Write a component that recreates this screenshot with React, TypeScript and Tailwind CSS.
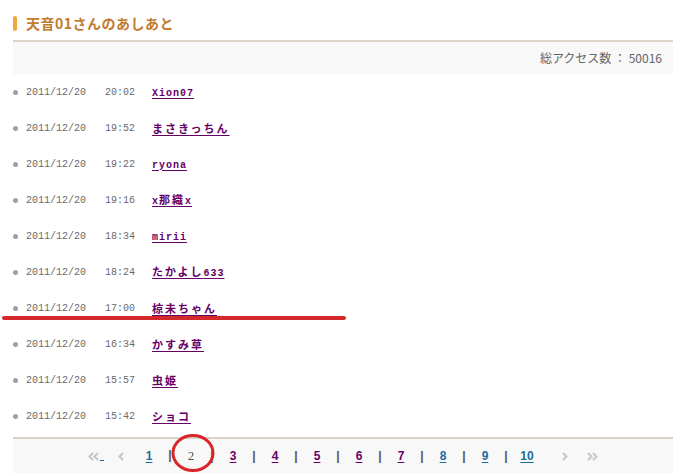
const rows: [string, string][] = [
  ['20:02', 'Xion07'],
  ['19:52', 'まさきっちん'],
  ['19:22', 'ryona'],
  ['19:16', 'x那織x'],
  ['18:34', 'mirii'],
  ['18:24', 'たかよし633'],
  ['17:00', '椋未ちゃん'],
  ['16:34', 'かすみ草'],
  ['15:57', '虫姫'],
  ['15:42', 'ショコ'],
];

// ascii in mono, CJK a bit larger and spaced out like the old bitmap font
function NameRuns({ name }: { name: string }) {
  const runs: { ascii: boolean; text: string }[] = [];
  for (const ch of name) {
    const ascii = ch.charCodeAt(0) < 128;
    const last = runs[runs.length - 1];
    if (last && last.ascii === ascii) last.text += ch;
    else runs.push({ ascii, text: ch });
  }
  return (
    <>
      {runs.map((r, i) =>
        r.ascii ? (
          <span key={i} className="text-[10px] tracking-[1px] font-['Liberation_Mono',monospace]">
            {r.text}
          </span>
        ) : (
          <span key={i} className="text-[11px] tracking-[2px] font-['Noto_Sans_CJK_JP',sans-serif]">
            {r.text}
          </span>
        )
      )}
    </>
  );
}

const Chevron = ({ double, right }: { double?: boolean; right?: boolean }) => (
  <svg width={double ? 11 : 7} height="9" viewBox={double ? '0 0 11 9' : '0 0 7 9'} className={right ? 'rotate-180' : ''}>
    <polyline points="5,1 1.5,4.5 5,8" fill="none" stroke="#c6c6c6" strokeWidth="2" />
    {double && <polyline points="10,1 6.5,4.5 10,8" fill="none" stroke="#c6c6c6" strokeWidth="2" />}
  </svg>
);

const pages = [1, 2, 3, 4, 5, 6, 7, 8, 9, 10];
const pageColor = (n: number) => (n === 1 || n >= 8 ? 'text-[#1d6c9c]' : 'text-[#660066]');

export default function App() {
  return (
    <div className="relative w-[678px] h-[473px] bg-white overflow-hidden">
      <div className="pl-[13px] pr-[5px]">
        {/* title */}
        <div className="h-[40px] pt-[6px] flex items-center">
          <div className="w-[4px] h-[15px] rounded-full bg-[#f0a63e]" />
          <h1 className="ml-[9px] text-[14px] leading-none font-bold tracking-[0.5px] text-[#c27c30] font-['Noto_Sans_CJK_JP',sans-serif]">
            天音01さんのあしあと
          </h1>
        </div>
        <div className="h-[2px] bg-[#d9d4c3]" />
        <div className="h-[32px] bg-[#f8f8f8] flex items-center justify-end pr-[11px] text-[12px] text-[#666] font-['Noto_Sans_CJK_JP',sans-serif]">
          総アクセス数 ： 50016
        </div>

        {/* list */}
        <ul>
          {rows.map(([time, name]) => (
            <li key={time} className="h-[36px] flex items-center">
              <span className="w-[5px] h-[5px] rounded-full bg-[#a0a0a0]" />
              <span className="ml-[8px] w-[79px] text-[10px] text-[#6a6a6a] font-['Liberation_Mono',monospace]">2011/12/20</span>
              <span className="w-[47px] text-[10px] text-[#6a6a6a] font-['Liberation_Mono',monospace]">{time}</span>
              <a href="#" className="text-[11px] font-bold text-[#660066] underline underline-offset-2 leading-none">
                <NameRuns name={name} />
              </a>
            </li>
          ))}
        </ul>

        {/* pager */}
        <div className="mt-[3px] h-[2px] bg-[#d9d4c3]" />
        <div className="h-[34px] bg-[#f8f8f8] flex items-center pl-[75px] text-[12px] font-bold font-['Liberation_Sans',sans-serif]">
          <span className="w-[26px] flex items-end">
            <Chevron double />
            <span className="ml-[1px] w-[4px] h-[1px] bg-[#1d6c9c]" />
          </span>
          <span className="w-[24.5px] pl-[4px] flex items-center">
            <Chevron />
          </span>
          {pages.map((n, i) => (
            <span key={n} className="flex">
              {i > 0 && <span className="w-[21px] text-center text-[#555]">|</span>}
              {n === 2 ? (
                <span className="w-[21px] text-center text-[#555] font-normal font-['Liberation_Serif',serif] text-[13px]">2</span>
              ) : (
                <a href="#" className={`w-[21px] text-center underline underline-offset-2 ${pageColor(n)}`}>
                  {n}
                </a>
              )}
            </span>
          ))}
          <span className="ml-[23.5px] flex items-center">
            <Chevron right />
          </span>
          <span className="ml-[19px] flex items-center">
            <Chevron double right />
          </span>
        </div>
      </div>

      {/* hand-drawn annotations */}
      <div className="absolute left-[2px] top-[316px] w-[344px] h-[4px] rounded-full bg-[#d4292b]" />
      <svg className="absolute left-[170px] top-[432px]" width="46" height="42" viewBox="0 0 46 42">
        <ellipse cx="23" cy="21" rx="20" ry="17.5" fill="none" stroke="#d8262a" strokeWidth="3" />
      </svg>
    </div>
  );
}
